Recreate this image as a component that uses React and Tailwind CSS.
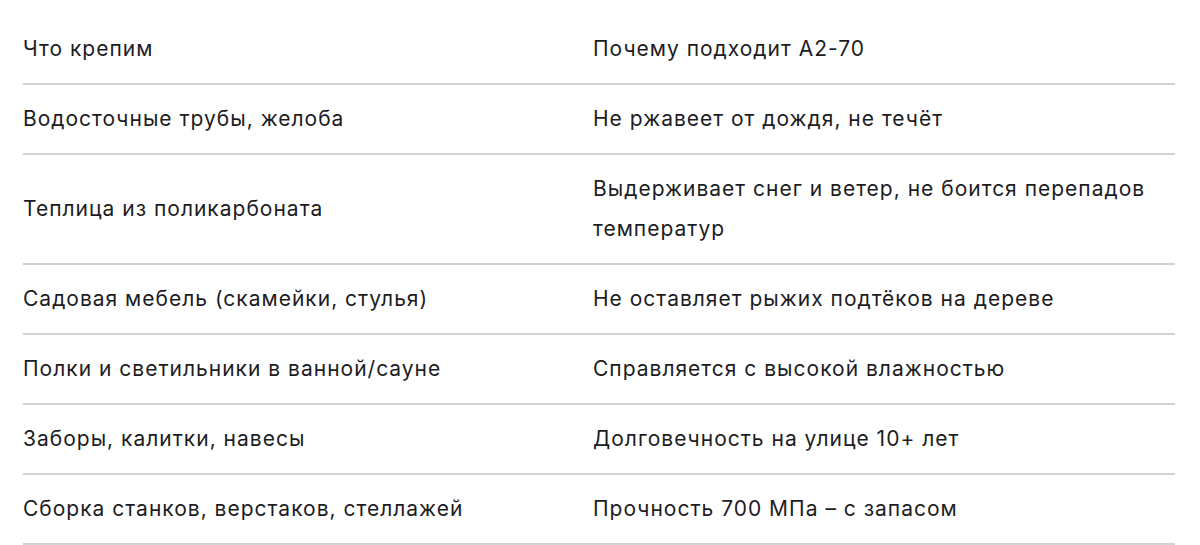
export default function App() {
  const rows = [
    ["Водосточные трубы, желоба", "Не ржавеет от дождя, не течёт"],
    ["Теплица из поликарбоната", "Выдерживает снег и ветер, не боится перепадов температур"],
    ["Садовая мебель (скамейки, стулья)", "Не оставляет рыжих подтёков на дереве"],
    ["Полки и светильники в ванной/сауне", "Справляется с высокой влажностью"],
    ["Заборы, калитки, навесы", "Долговечность на улице 10+ лет"],
    ["Сборка станков, верстаков, стеллажей", "Прочность 700 МПа – с запасом"],
  ];
  return (
    <div className="w-[1200px] h-[545px] bg-white pl-[23px] pr-[25px] pt-[15px] overflow-hidden" style={{ fontFamily: "Inter, 'Noto Sans', sans-serif" }}>
      <div className="text-[21px] leading-[39.5px] tracking-[1px] text-[#1d1d1f]">
        <div className="grid grid-cols-[570px_1fr] border-b-2 border-[#d2d2d2] py-[14.25px]">
          <div>Что крепим</div>
          <div>Почему подходит А2-70</div>
        </div>
        {rows.map(([a, b], i) => (
          <div key={i} className="grid grid-cols-[570px_1fr] items-center border-b-2 border-[#d2d2d2] py-[14.25px]">
            <div>{a}</div>
            <div className="pr-[10px]">{b}</div>
          </div>
        ))}
      </div>
    </div>
  );
}
